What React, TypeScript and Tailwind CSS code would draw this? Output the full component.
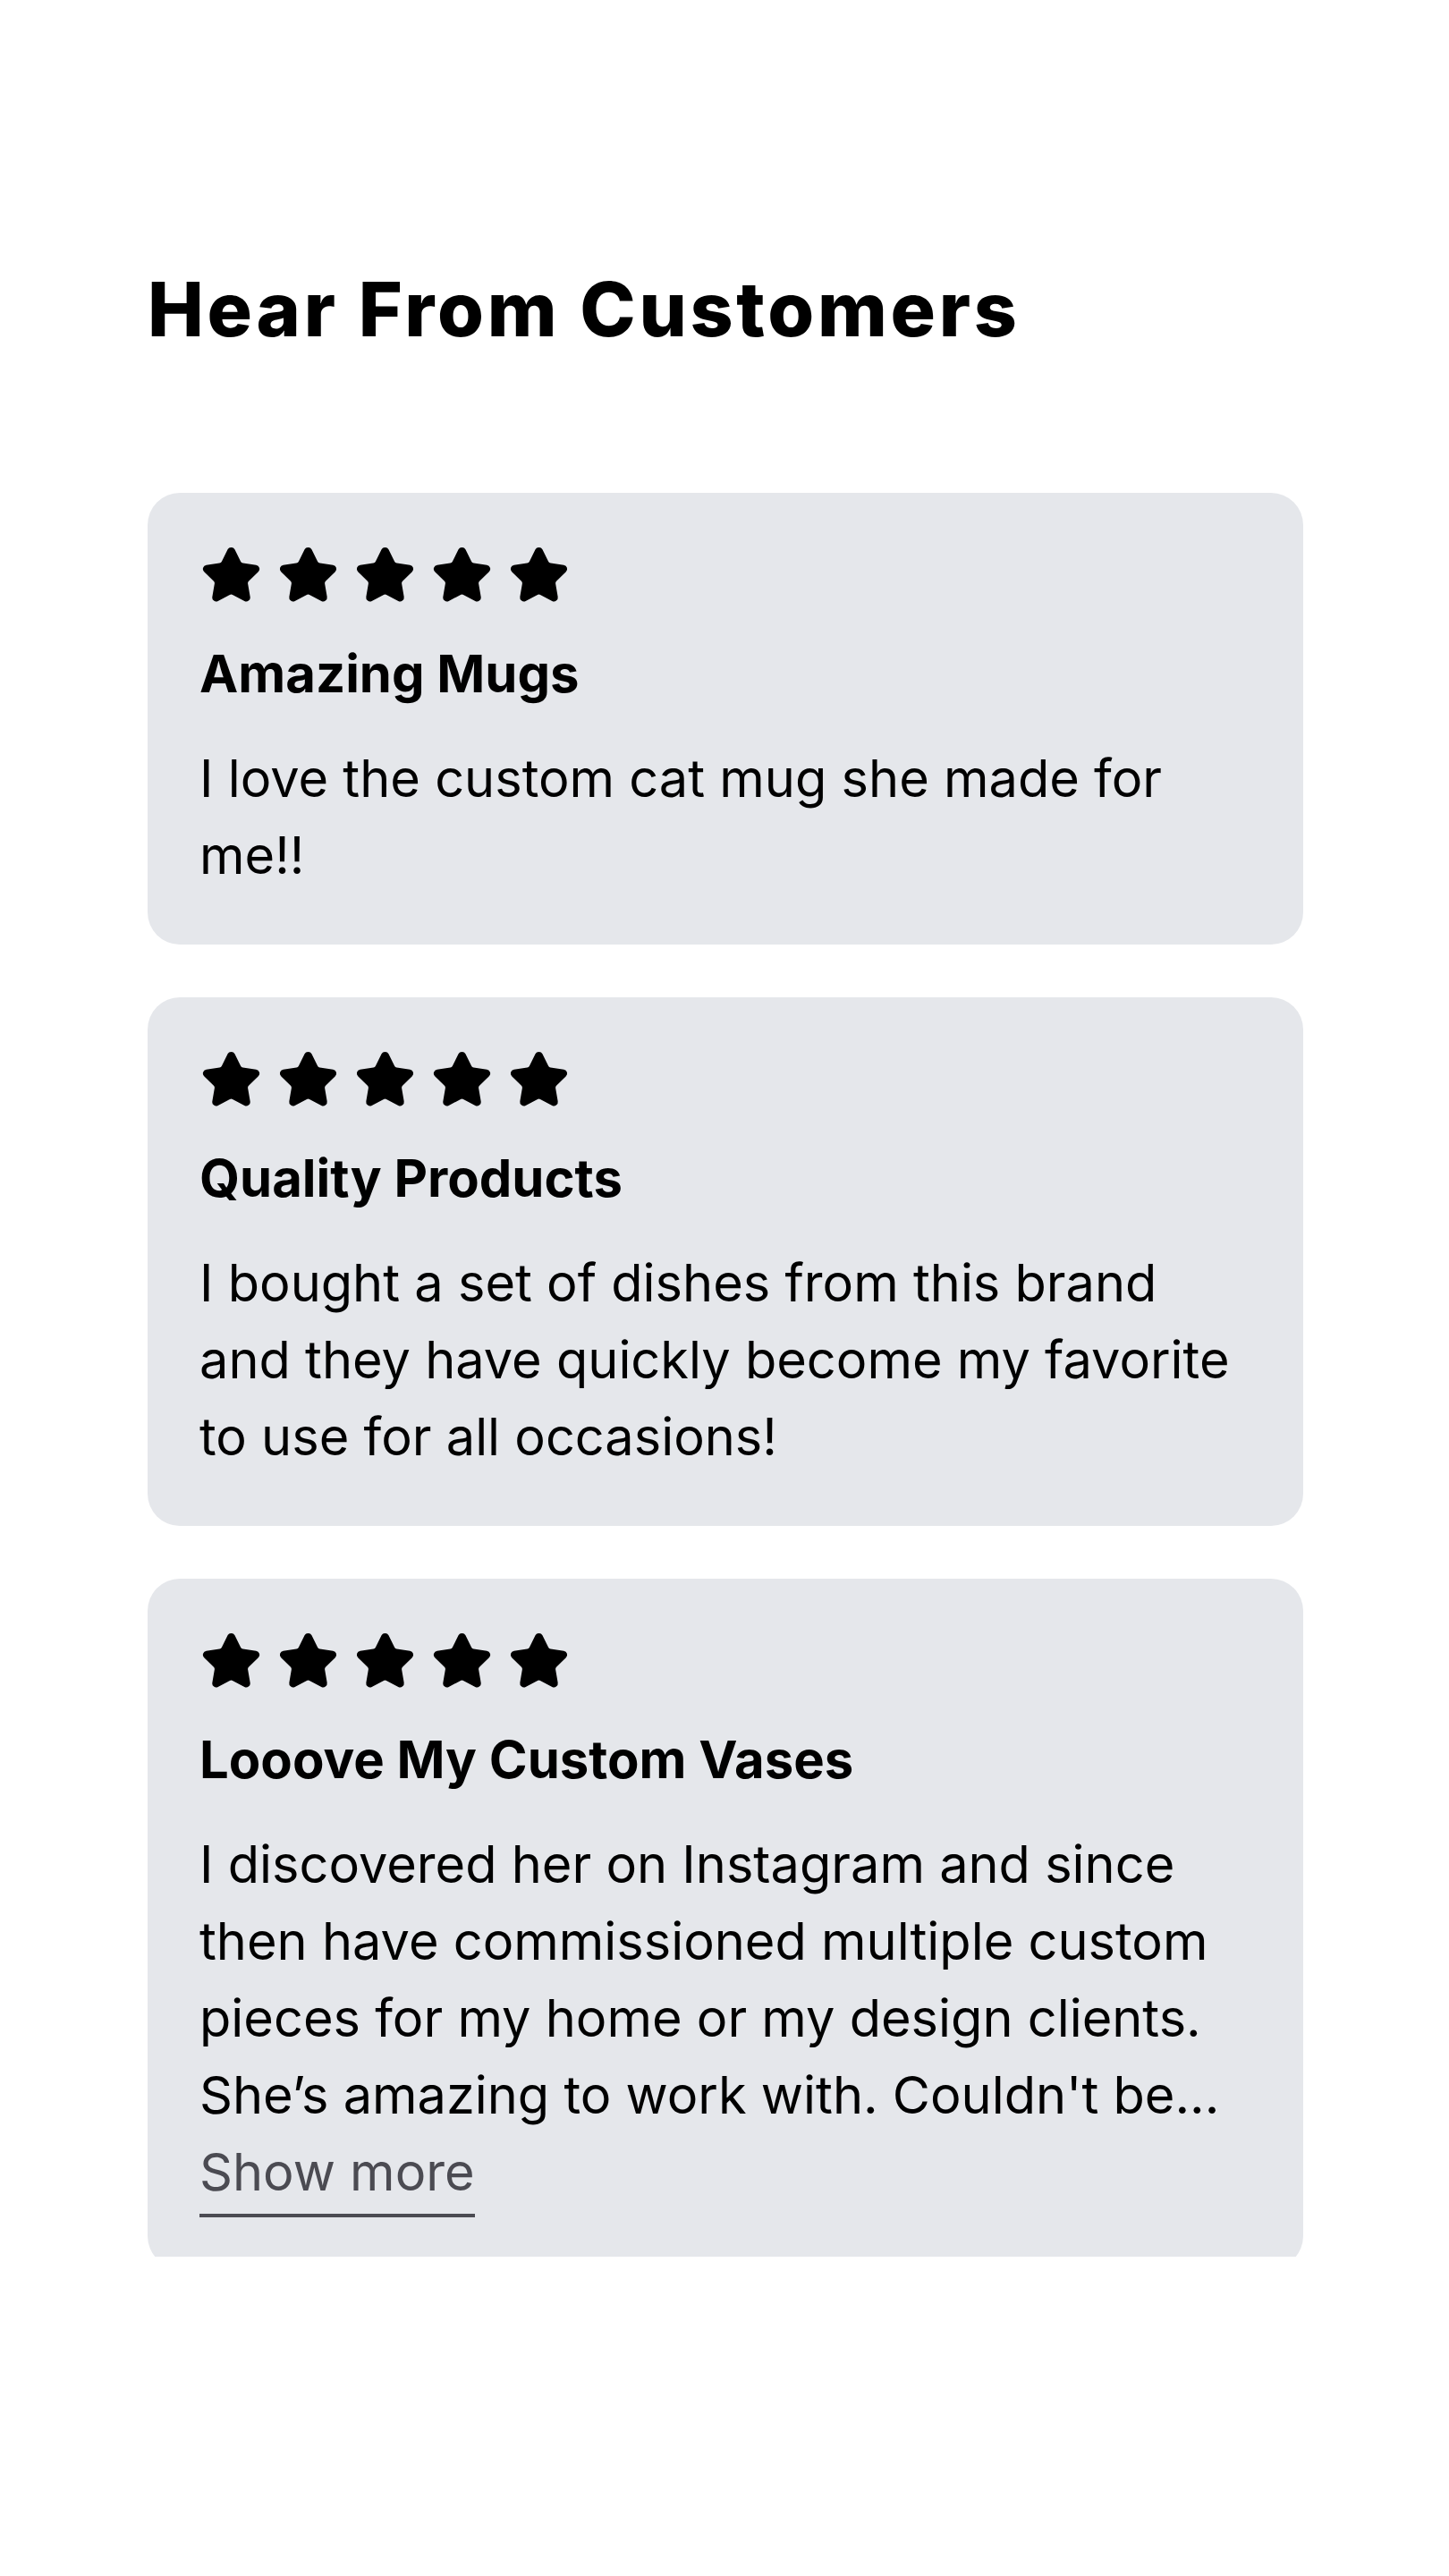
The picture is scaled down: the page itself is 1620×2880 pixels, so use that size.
import React from 'react';

type Review = {
  id: number;
  title: string;
  body: string;
  truncated?: boolean;
};

const reviews: Review[] = [
  { id: 1, title: 'Amazing Mugs', body: 'I love the custom cat mug she made for me!!' },
  {
    id: 2,
    title: 'Quality Products',
    body: 'I bought a set of dishes from this brand and they have quickly become my favorite to use for all occasions!',
  },
  {
    id: 3,
    title: 'Looove My Custom Vases',
    body: "I discovered her on Instagram and since then have commissioned multiple custom pieces for my home or my design clients. She\u2019s amazing to work with. Couldn't be...",
    truncated: true,
  },
];

function Star() {
  return (
    <svg
      width="69"
      height="69"
      viewBox="0 0 24 24"
      fill="currentColor"
      stroke="currentColor"
      strokeWidth="2"
      strokeLinejoin="round"
      strokeLinecap="round"
      className="shrink-0"
    >
      <path d="M11.525 2.295a.53.53 0 0 1 .95 0l2.31 4.679a2.123 2.123 0 0 0 1.595 1.16l5.166.756a.53.53 0 0 1 .294.904l-3.736 3.638a2.123 2.123 0 0 0-.611 1.878l.882 5.14a.53.53 0 0 1-.771.56l-4.618-2.428a2.122 2.122 0 0 0-1.973 0L6.396 21.01a.53.53 0 0 1-.77-.56l.881-5.139a2.122 2.122 0 0 0-.611-1.879L2.16 9.795a.53.53 0 0 1 .294-.906l5.165-.755a2.122 2.122 0 0 0 1.597-1.16z" />
    </svg>
  );
}

function ReviewCard({ review }: { review: Review }) {
  return (
    <div className="bg-[#e5e7eb] rounded-[36px] pl-[58px] pr-[60px] pt-[58px] pb-[57px] text-black">
      <div className="flex gap-[17px] pl-[1px]">
        {[0, 1, 2, 3, 4].map((i) => (
          <Star key={i} />
        ))}
      </div>
      <h3 className="mt-[39px] text-[58px] leading-[72px] font-bold">{review.title}</h3>
      <p className="mt-[38px] text-[57.7px] leading-[86px]">{review.body}</p>
      {review.truncated && (
        <button className="inline-block text-[57.7px] leading-[86px] text-[#4b4b52] border-b-4 border-[#4b4b52] pb-[4px]">
          Show more
        </button>
      )}
    </div>
  );
}

export default function App() {
  return (
    <div
      className="min-h-[2880px] bg-white pl-[165px] pt-[295px]"
      style={{ fontFamily: 'Inter, "Noto Sans", sans-serif' }}
    >
      <h2 className="text-[84px] leading-[101px] font-extrabold tracking-[3.7px] text-black">
        Hear From Customers
      </h2>
      <div className="mt-[155px] w-[1292px] h-[1972px] overflow-hidden flex flex-col gap-[59px]">
        {reviews.map((r) => (
          <ReviewCard key={r.id} review={r} />
        ))}
      </div>
    </div>
  );
}
